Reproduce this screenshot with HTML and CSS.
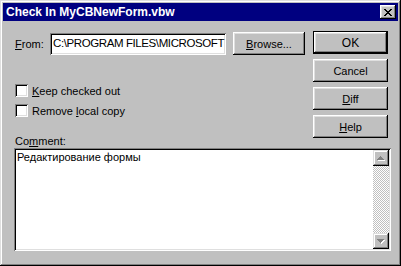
FILE: index.html
```html
<!DOCTYPE html>
<html lang="en">
<head>
  <meta charset="UTF-8">
  <title>Check In MyCBNewForm.vbw</title>
  <link rel="stylesheet" href="styles.css">
</head>
<body>
  <div class="window">
    <div class="title-bar">
      <span class="title">Check In MyCBNewForm.vbw</span>
      <span class="close-btn">
        <svg width="8" height="7" viewBox="0 0 8 7" shape-rendering="crispEdges">
          <path fill="#000" d="M0 0h2v1h-2zM6 0h2v1h-2zM1 1h2v1h-2zM5 1h2v1h-2zM2 2h4v1h-4zM3 3h2v1h-2zM2 4h4v1h-4zM1 5h2v1h-2zM5 5h2v1h-2zM0 6h2v1h-2zM6 6h2v1h-2z"/>
        </svg>
      </span>
    </div>

    <div class="content">
      <div class="form-area">
        <div class="form-group">
          <span class="from-label"><u>F</u>rom:</span>
          <div class="text-field">C:\PROGRAM FILES\MICROSOFT</div>
          <button class="button browse-btn"><u>B</u>rowse...</button>
        </div>
        <div class="check-row first">
          <span class="check-box"></span>
          <span><u>K</u>eep checked out</span>
        </div>
        <div class="check-row">
          <span class="check-box"></span>
          <span>Remove <u>l</u>ocal copy</span>
        </div>
        <div class="comment-label">Co<u>m</u>ment:</div>
      </div>

      <div class="button-column">
        <button class="button default-btn">OK</button>
        <button class="button">Cancel</button>
        <button class="button"><u>D</u>iff</button>
        <button class="button"><u>H</u>elp</button>
      </div>

      <div class="comment-box">
        <div class="comment-text">Редактирование формы</div>
        <div class="scrollbar">
          <span class="scroll-btn">
            <svg width="8" height="5" viewBox="0 0 8 5" shape-rendering="crispEdges">
              <path fill="#fff" d="M4 1h1v1h1v1h1v1h1v1h-7v-1h1v-1h1v-1h1z"/>
              <path fill="#808080" d="M3 0h1v1h1v1h1v1h1v1h-7v-1h1v-1h1v-1h1z"/>
            </svg>
          </span>
          <span class="scroll-track"></span>
          <span class="scroll-btn">
            <svg width="8" height="5" viewBox="0 0 8 5" shape-rendering="crispEdges">
              <path fill="#fff" d="M1 1h7v1h-1v1h-1v1h-1v1h-1v-1h-1v-1h-1v-1h-1z"/>
              <path fill="#808080" d="M0 0h7v1h-1v1h-1v1h-1v1h-1v-1h-1v-1h-1v-1h-1z"/>
            </svg>
          </span>
        </div>
      </div>
    </div>
  </div>
</body>
</html>
```

FILE: styles.css
```css
body {
  margin: 0;
  font-family: "Liberation Sans", Arial, sans-serif;
  font-size: 11px;
  color: #000;
}
u {
  text-underline-offset: 1px;
}

.window {
  width: 401px;
  height: 266px;
  box-sizing: border-box;
  padding: 3px;
  background: #c0c0c0;
  box-shadow: inset -1px -1px #000, inset 1px 1px #dfdfdf,
    inset -2px -2px #808080, inset 2px 2px #fff;
}

.title-bar {
  height: 18px;
  background: #000080;
  display: flex;
  align-items: center;
  justify-content: space-between;
  padding: 0 2px 0 3px;
}
.title {
  color: #fff;
  font-weight: bold;
  font-size: 12px;
}
.close-btn {
  width: 16px;
  height: 14px;
  box-sizing: border-box;
  background: #c0c0c0;
  display: flex;
  justify-content: center;
  align-items: center;
  padding-right: 1px;
  box-shadow: inset -1px -1px #000, inset 1px 1px #fff,
    inset -2px -2px #808080, inset 2px 2px #dfdfdf;
}
.close-btn svg {
  display: block;
}

.content {
  display: grid;
  grid-template-columns: 1fr 75px;
  column-gap: 8px;
  padding: 10px 10px 0 11px;
}

.form-area {
  padding-left: 1px;
}
.form-group {
  display: flex;
  align-items: center;
  margin-top: 1px;
  height: 23px;
}
.from-label {
  width: 35px;
}
.text-field {
  width: 176px;
  height: 22px;
  box-sizing: border-box;
  background: #fff;
  padding: 4px 0 0 3px;
  margin-right: 7px;
  font-size: 11.5px;
  letter-spacing: -0.4px;
  white-space: nowrap;
  overflow: hidden;
  box-shadow: inset 1px 1px #808080, inset -1px -1px #fff,
    inset 2px 2px #000, inset -2px -2px #dfdfdf;
}

.button {
  font-family: inherit;
  font-size: 11px;
  color: #000;
  background: #c0c0c0;
  border: none;
  padding: 0;
  height: 23px;
  box-sizing: border-box;
  box-shadow: inset -1px -1px #000, inset 1px 1px #fff,
    inset -2px -2px #808080, inset 2px 2px #dfdfdf;
}
.browse-btn {
  width: 72px;
  align-self: flex-start;
}
.button-column {
  display: flex;
  flex-direction: column;
  gap: 5px;
  align-self: start;
}
.default-btn {
  border: 1px solid #000;
  font-size: 12px;
}

.check-row {
  display: flex;
  align-items: center;
  gap: 4px;
  height: 13px;
  margin-top: 7px;
}
.check-row.first {
  margin-top: 29px;
}
.check-box {
  width: 13px;
  height: 13px;
  box-sizing: border-box;
  background: #fff;
  box-shadow: inset 1px 1px #808080, inset -1px -1px #fff,
    inset 2px 2px #000, inset -2px -2px #dfdfdf;
}
.comment-label {
  margin-top: 18px;
  line-height: 13px;
}

.comment-box {
  grid-column: 1 / -1;
  margin-right: -3px;
  height: 103px;
  box-sizing: border-box;
  padding: 2px;
  background: #fff;
  display: flex;
  box-shadow: inset 1px 1px #808080, inset -1px -1px #fff,
    inset 2px 2px #000, inset -2px -2px #dfdfdf;
}
.comment-text {
  flex: 1;
  padding: 1px 0 0 1px;
}
.scrollbar {
  width: 16px;
  display: flex;
  flex-direction: column;
}
.scroll-btn {
  height: 16px;
  background: #c0c0c0;
  display: flex;
  justify-content: center;
  align-items: center;
  box-shadow: inset -1px -1px #000, inset 1px 1px #dfdfdf,
    inset -2px -2px #808080, inset 2px 2px #fff;
}
.scroll-track {
  flex: 1;
  background: repeating-conic-gradient(#c0c0c0 0 25%, #fff 0 50%) 0 0 / 2px 2px;
}
```
